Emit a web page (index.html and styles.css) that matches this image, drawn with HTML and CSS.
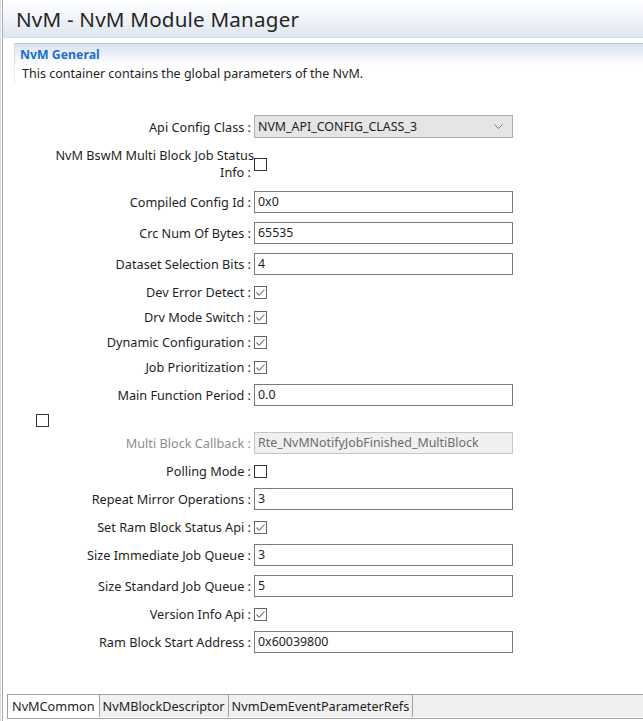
FILE: index.html
```html
<!DOCTYPE html>
<html>
<head>
<meta charset="utf-8">
<link rel="stylesheet" href="styles.css">
</head>
<body>
<div class="frame">
  <div class="header"><h1 class="title">NvM - NvM Module Manager</h1></div>
  <div class="sep"></div>
  <div class="section">
    <div class="section-head">NvM General</div>
    <p class="desc">This container contains the global parameters of the NvM.</p>
  </div>
  <div class="form">
    <div class="row input-row">
      <label class="lbl">Api Config Class :</label>
      <div class="select"><span>NVM_API_CONFIG_CLASS_3</span>
        <svg class="chev" width="9" height="6" viewBox="0 0 9 6"><polyline points="0.5,0.5 4.5,4.5 8.5,0.5" fill="none" stroke="#7a7a7a" stroke-width="1"/></svg>
      </div>
    </div>
    <div class="row cb-row tall">
      <label class="lbl two"><span class="l1">NvM BswM Multi Block Job Status</span><span class="l2">Info :</span></label>
      <span class="cb"></span>
    </div>
    <div class="row input-row"><label class="lbl">Compiled Config Id :</label><div class="input">0x0</div></div>
    <div class="row input-row"><label class="lbl">Crc Num Of Bytes :</label><div class="input">65535</div></div>
    <div class="row input-row"><label class="lbl">Dataset Selection Bits :</label><div class="input">4</div></div>
    <div class="row cb-row"><label class="lbl">Dev Error Detect :</label><span class="cb on"><svg width="11" height="11" viewBox="0 0 11 11"><polyline points="1.5,5.5 4.2,8.3 9.5,2.5" fill="none" stroke="#707070" stroke-width="1.1"/></svg></span></div>
    <div class="row cb-row"><label class="lbl">Drv Mode Switch :</label><span class="cb on"><svg width="11" height="11" viewBox="0 0 11 11"><polyline points="1.5,5.5 4.2,8.3 9.5,2.5" fill="none" stroke="#707070" stroke-width="1.1"/></svg></span></div>
    <div class="row cb-row"><label class="lbl">Dynamic Configuration :</label><span class="cb on"><svg width="11" height="11" viewBox="0 0 11 11"><polyline points="1.5,5.5 4.2,8.3 9.5,2.5" fill="none" stroke="#707070" stroke-width="1.1"/></svg></span></div>
    <div class="row cb-row"><label class="lbl">Job Prioritization :</label><span class="cb on"><svg width="11" height="11" viewBox="0 0 11 11"><polyline points="1.5,5.5 4.2,8.3 9.5,2.5" fill="none" stroke="#707070" stroke-width="1.1"/></svg></span></div>
    <div class="row input-row"><label class="lbl">Main Function Period :</label><div class="input">0.0</div></div>
    <div class="lone"><span class="cb"></span></div>
    <div class="row input-row"><label class="lbl dis">Multi Block Callback :</label><div class="input disabled">Rte_NvMNotifyJobFinished_MultiBlock</div></div>
    <div class="row cb-row"><label class="lbl">Polling Mode :</label><span class="cb"></span></div>
    <div class="row input-row"><label class="lbl">Repeat Mirror Operations :</label><div class="input">3</div></div>
    <div class="row cb-row"><label class="lbl">Set Ram Block Status Api :</label><span class="cb on"><svg width="11" height="11" viewBox="0 0 11 11"><polyline points="1.5,5.5 4.2,8.3 9.5,2.5" fill="none" stroke="#707070" stroke-width="1.1"/></svg></span></div>
    <div class="row input-row"><label class="lbl">Size Immediate Job Queue :</label><div class="input">3</div></div>
    <div class="row input-row"><label class="lbl">Size Standard Job Queue :</label><div class="input">5</div></div>
    <div class="row cb-row"><label class="lbl">Version Info Api :</label><span class="cb on"><svg width="11" height="11" viewBox="0 0 11 11"><polyline points="1.5,5.5 4.2,8.3 9.5,2.5" fill="none" stroke="#707070" stroke-width="1.1"/></svg></span></div>
    <div class="row input-row"><label class="lbl">Ram Block Start Address :</label><div class="input">0x60039800</div></div>
  </div>
  <div class="folder">
    <div class="tabs">
      <div class="tab active">NvMCommon</div>
      <div class="tab">NvMBlockDescriptor</div>
      <div class="tab">NvmDemEventParameterRefs</div>
      <div class="tab-fill"></div>
    </div>
  </div>
  <div class="bottom"></div>
</div>
</body>
</html>
```
FILE: styles.css
```css
html, body {
  margin: 0;
  padding: 0;
  background: #ffffff;
}
body {
  font-family: "Noto Sans", "Open Sans", sans-serif;
  font-size: 12.7px;
  color: #1e1e1e;
  width: 643px;
  height: 721px;
  overflow: hidden;
}
.frame {
  box-sizing: border-box;
  height: 721px;
  border-left: 1px solid #dcdcdc;
  display: flex;
  flex-direction: column;
}
.header {
  margin-left: 1px;
  border-left: 1px solid #a8a8a8;
  height: 37px;
  flex: none;
  background: linear-gradient(#ffffff, #f3f6fa 40%, #dfe6f0);
  display: flex;
  align-items: center;
  padding-left: 13px;
}
.title {
  margin: 0;
  font-weight: normal;
  font-size: 20.6px;
  color: #262626;
  letter-spacing: 0.2px;
}
.sep {
  flex: none;
  margin-left: 1px;
  border-left: 1px solid #a8a8a8;
  height: 5px;
  border-top: 1px solid #d3dde8;
}
.section {
  flex: none;
  margin-left: 1px;
  border-left: 1px solid #a8a8a8;
  padding-left: 11px;
}
.section-head {
  border-top: 1px solid #b7c9da;
  border-left: 1px solid #d0dbe6;
  background: linear-gradient(#d9e3ef, #ffffff);
  height: 21px;
  line-height: 21px;
  padding-left: 5px;
  font-weight: bold;
  font-size: 12.3px;
  color: #1a6fcb;
}
.desc {
  margin: 0;
  padding-left: 7px;
  border-left: 1px solid #f0f0f0;
  height: 20px;
  line-height: 18px;
  font-size: 12.5px;
}
.form {
  flex: 1;
  margin-left: 1px;
  border-left: 1px solid #a8a8a8;
  padding-top: 30px;
  display: flex;
  flex-direction: column;
  gap: 9px;
}
.row {
  display: grid;
  grid-template-columns: 248px 259px;
  column-gap: 3px;
  align-items: center;
}
.input-row { height: 22px; }
.cb-row { height: 16px; }
.cb-row.tall { height: 36px; }
.lbl {
  text-align: right;
  white-space: nowrap;
  line-height: 16px;
}
.lbl.two {
  display: flex;
  flex-direction: column;
  align-items: flex-end;
  line-height: 15px;
  gap: 2px;
}
.lbl.two .l1 { margin-right: -3px; }
.lbl.dis { color: #8d8d8d; }
.input, .select {
  box-sizing: border-box;
  height: 22px;
  border: 1px solid #7a7a7a;
  padding-left: 3px;
  line-height: 20px;
  background: #fff;
  font-size: 12.4px;
}
.select {
  border-color: #adadad;
  background: #e5e5e5;
  height: 23px;
  display: flex;
  align-items: center;
  justify-content: space-between;
  padding-right: 9px;
}
.chev { display: block; }
.input.disabled {
  background: #f0f0f0;
  border-color: #c5c5c5;
  color: #6d6d6d;
}
.cb {
  box-sizing: border-box;
  width: 13px;
  height: 13px;
  border: 1px solid #333333;
  background: #fff;
  display: flex;
  align-items: center;
  justify-content: center;
}
.cb.on { border-color: #666666; }
.lone {
  height: 13px;
  padding-left: 33px;
  margin-top: -1px;
  margin-bottom: -4px;
}
.folder {
  flex: none;
  margin-left: 1px;
  border-left: 1px solid #a8a8a8;
  padding-left: 4px;
}
.tabs {
  border-left: 1px solid #a0a0a0;
  border-top: 1px solid #a0a0a0;
  border-bottom: 1px solid #a0a0a0;
  padding-bottom: 1px;
  display: flex;
  height: 22px;
}
.tab {
  padding: 0 3px 0 3px;
  line-height: 22px;
  background: #f0f0f0;
  border-right: 1px solid #a0a0a0;
  color: #1e1e1e;
}
.tab.active { background: #ffffff; padding-left: 4px; padding-right: 4px; }
.tab-fill {
  flex: 1;
  background: #f0f0f0;
}
.bottom {
  flex: none;
  height: 2px;
  margin-left: 1px;
  border-left: 1px solid #a8a8a8;
}
```
